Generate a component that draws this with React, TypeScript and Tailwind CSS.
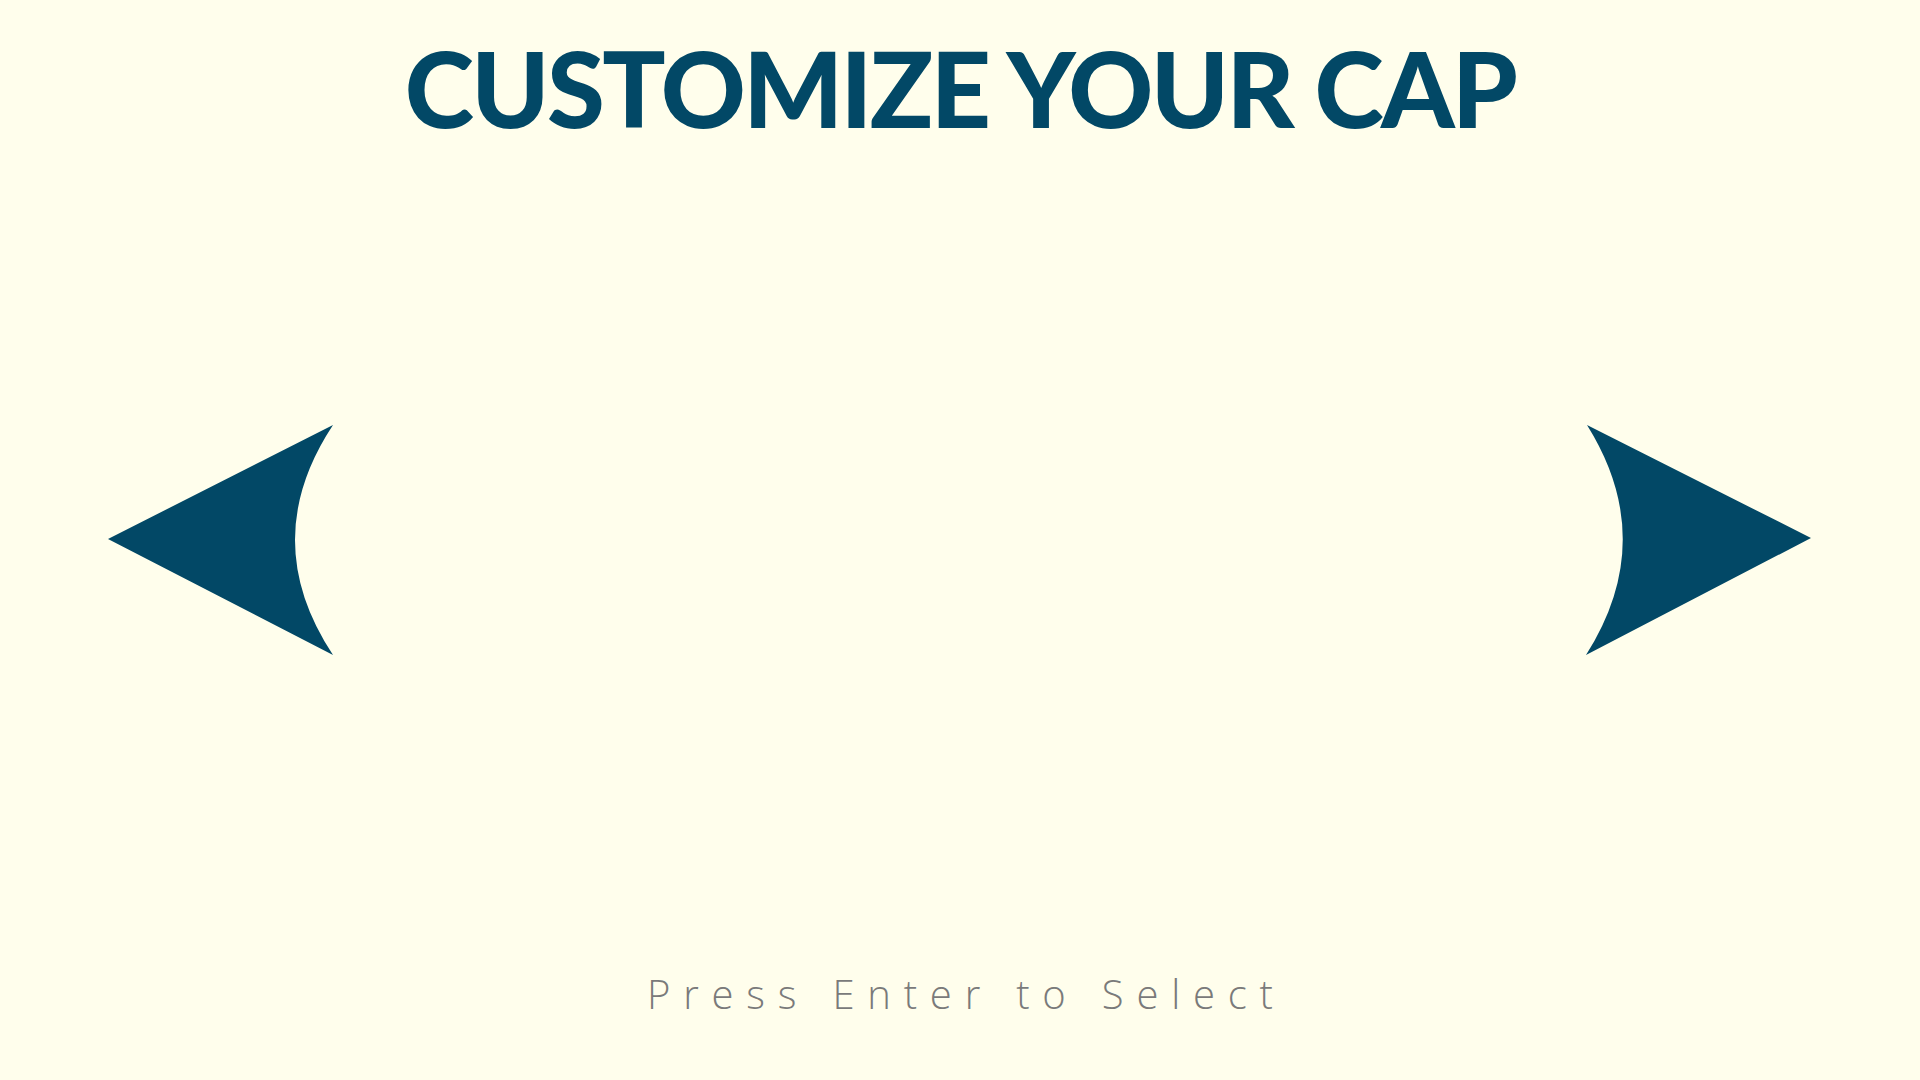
export default function App() {
  return (
    <div className="flex h-screen w-full flex-col items-center bg-[#fffeec]">
      <h1
        className="mt-[35px] text-[105px] leading-none font-black tracking-[-0.025em] text-[#024866]"
        style={{ fontFamily: "Lato, sans-serif" }}
      >
        CUSTOMIZE YOUR CAP
      </h1>

      <div className="mt-[284px] flex w-full items-center justify-between pl-[108px] pr-[108px]">
        <svg width="226" height="232" viewBox="0 0 226 232" className="block">
          <path d="M0 115 L225 1 Q149 116 225 231 Z" fill="#024866" />
        </svg>
        <svg width="226" height="232" viewBox="0 0 226 232" className="block">
          <path d="M1 1 Q73 116 0 231 L225 114 Z" fill="#024866" />
        </svg>
      </div>

      <p
        className="mt-auto mb-[56px] pl-[0.32em] text-[40px] font-light tracking-[0.32em] text-[#7a7a7a]"
        style={{ fontFamily: "'Open Sans', sans-serif" }}
      >
        Press Enter to Select
      </p>
    </div>
  );
}
